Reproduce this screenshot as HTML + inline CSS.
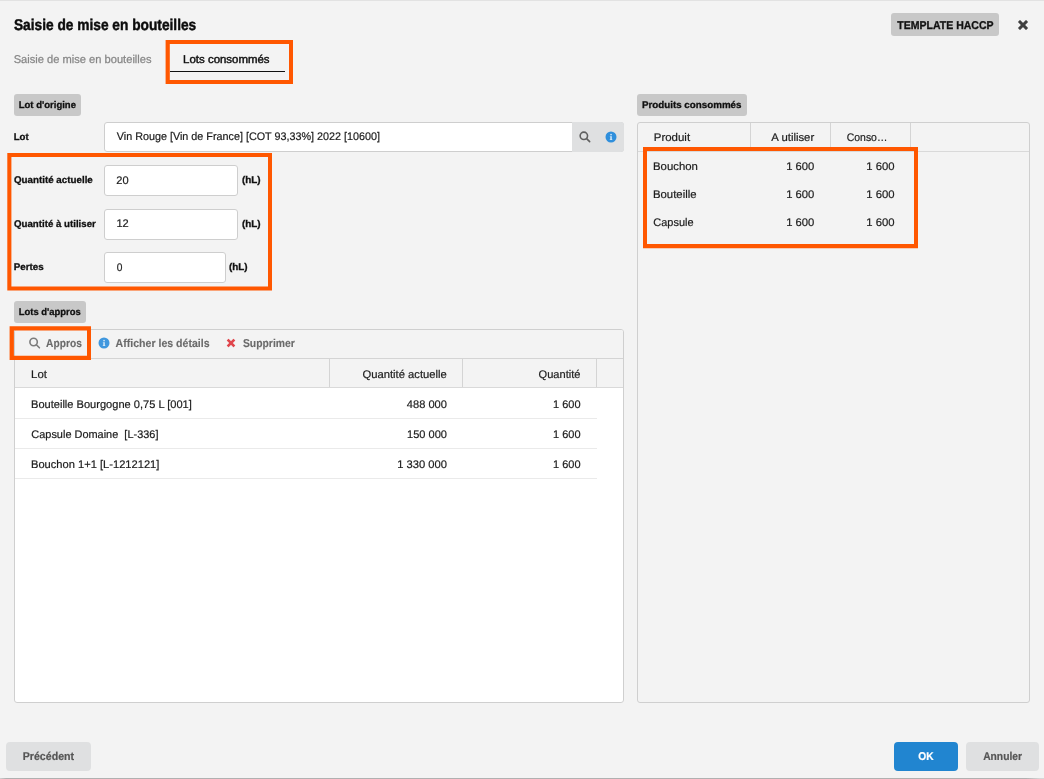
<!DOCTYPE html>
<html lang="fr">
<head>
<meta charset="utf-8">
<title>Saisie de mise en bouteilles</title>
<style>
*{box-sizing:border-box;margin:0;padding:0}
html,body{width:1044px;height:779px;overflow:hidden;background:#f3f3f3}
body{position:relative;font-family:"Liberation Sans",Arial,sans-serif;font-size:11px;color:#222}
.a{position:absolute}
.t{position:absolute;left:0;top:0;white-space:pre;transform-origin:0 0;text-rendering:geometricPrecision}
#root{position:absolute;left:0;top:0;width:1044px;height:779px;will-change:transform}
.s-title{font-size:15.5px;line-height:19px;font-weight:bold;color:#0c0c0c;-webkit-text-stroke:0.45px #0c0c0c}
.s-tpl{font-size:11.3px;line-height:15px;font-weight:bold;color:#111;-webkit-text-stroke:0.3px #111}
.s-tab1{font-size:11.3px;line-height:15px;font-weight:normal;color:#868686;-webkit-text-stroke:0.25px #868686}
.s-tab2{font-size:11.3px;line-height:15px;font-weight:normal;color:#111;-webkit-text-stroke:0.45px #111}
.s-lbl{font-size:9.7px;line-height:13px;font-weight:bold;color:#111;-webkit-text-stroke:0.3px #111}
.s-txt{font-size:11.1px;line-height:15px;font-weight:normal;color:#1c1c1c;-webkit-text-stroke:0.2px #1c1c1c}
.s-tb{font-size:11.4px;line-height:15px;font-weight:bold;color:#6a6a6a;-webkit-text-stroke:0.12px #6a6a6a}
.s-btn{font-size:11.3px;line-height:15px;font-weight:bold;color:#555;-webkit-text-stroke:0.2px #555}
.s-ok{font-size:11.3px;line-height:15px;font-weight:bold;color:#fff;-webkit-text-stroke:0.2px #fff}

</style>
</head>
<body>
<div id="root">
<div class="a" style="left:0px;top:0px;width:1044px;height:1px;background:#e2e2e2"></div>
<div class="a" style="left:0px;top:778px;width:1044px;height:1px;background:linear-gradient(to right,#d0d0d0 0,#b0b0b0 6px,#b0b0b0 1026px,#d6d6d6 1040px)"></div>
<div class="t s-title" style="transform:translate(13.95px,16.00px) scaleX(0.8852)">Saisie de mise en bouteilles</div>
<div class="a" style="left:891px;top:13px;width:108px;height:23px;background:#c8c8c8;border-radius:3px"></div>
<div class="t s-tpl" style="transform:translate(897.37px,19.00px) scaleX(0.9306)">TEMPLATE HACCP</div>
<svg class="a" style="left:1015px;top:16.85px" width="16" height="16" viewBox="-8 -8 16 16"><rect x="-5.80" y="-1.55" width="11.61" height="3.10" rx="0.5" fill="#404040" transform="rotate(45)"/><rect x="-5.80" y="-1.55" width="11.61" height="3.10" rx="0.5" fill="#404040" transform="rotate(-45)"/></svg>
<div class="t s-tab1" style="transform:translate(13.69px,53.00px) scaleX(0.9845)">Saisie de mise en bouteilles</div>
<div class="t s-tab2" style="transform:translate(183.11px,53.00px) scaleX(1.0128)">Lots consommés</div>
<div class="a" style="left:170px;top:71px;width:115px;height:1px;background:#111"></div>
<svg class="a" style="left:0;top:0" width="1044" height="779" viewBox="0 0 1044 779"><path fill="#ff5700" fill-rule="evenodd" d="M165.6 40H293V84H165.6Z M169.8 44H289V80H169.8Z"/></svg>
<div class="a" style="left:14px;top:94px;width:67px;height:22px;background:#c8c8c8;border-radius:3px"></div>
<div class="t s-lbl" style="transform:translate(18.72px,99.00px) scaleX(0.9822)">Lot d&#x27;origine</div>
<div class="t s-lbl" style="transform:translate(13.73px,131.00px) scaleX(0.9930)">Lot</div>
<div class="a" style="left:104px;top:122px;width:520px;height:30px;background:#fff;border:1px solid #cecece;border-radius:3px"></div>
<div class="a" style="left:572px;top:122px;width:52px;height:30px;background:#dfe0e1;border-radius:0 3px 3px 0"></div>
<div class="t s-txt" style="transform:translate(116.78px,130.00px) scaleX(0.9723)">Vin Rouge [Vin de France] [COT 93,33%] 2022 [10600]</div>
<svg class="a" style="left:0;top:0" width="1044" height="779" viewBox="0 0 1044 779"><circle cx="583.85" cy="135.85" r="3.7" fill="none" stroke="#606060" stroke-width="1.6"/><path d="M586.61 138.61 L589.65 141.65" stroke="#606060" stroke-width="1.6" stroke-linecap="round"/></svg>
<svg class="a" style="left:605px;top:130.75px" width="12" height="12" viewBox="0 0 12 12"><circle cx="6" cy="6" r="5.5" fill="#2f8fdc"/><rect x="5.3" y="2.9" width="1.5" height="1.4" fill="#fff" fill-opacity=".8"/><rect x="5.3" y="5.2" width="1.5" height="3.7" fill="#fff" fill-opacity=".8"/><rect x="4.8" y="5.2" width="0.6" height="0.7" fill="#fff" fill-opacity=".6"/><rect x="4.7" y="8.3" width="2.7" height="0.7" fill="#fff" fill-opacity=".6"/></svg>
<div class="t s-lbl" style="transform:translate(13.95px,174.00px) scaleX(1.0102)">Quantité actuelle</div>
<div class="a" style="left:104px;top:165px;width:134px;height:31px;background:#fff;border:1px solid #cecece;border-radius:3px"></div>
<div class="t s-txt" style="transform:translate(116.36px,173.60px) scaleX(0.9961)">20</div>
<div class="t s-lbl" style="transform:translate(241.92px,173.70px) scaleX(1.0224)">(hL)</div>
<div class="t s-lbl" style="transform:translate(13.95px,218.00px) scaleX(1.0008)">Quantité à utiliser</div>
<div class="a" style="left:104px;top:209px;width:134px;height:31px;background:#fff;border:1px solid #cecece;border-radius:3px"></div>
<div class="t s-txt" style="transform:translate(116.42px,217.00px) scaleX(0.9958)">12</div>
<div class="t s-lbl" style="transform:translate(241.92px,217.70px) scaleX(1.0224)">(hL)</div>
<div class="t s-lbl" style="transform:translate(13.72px,261.00px) scaleX(1.0152)">Pertes</div>
<div class="a" style="left:104px;top:252px;width:122px;height:31px;background:#fff;border:1px solid #cecece;border-radius:3px"></div>
<div class="t s-txt" style="transform:translate(116.66px,260.60px) scaleX(0.9187)">0</div>
<div class="t s-lbl" style="transform:translate(228.92px,260.70px) scaleX(1.0204)">(hL)</div>
<svg class="a" style="left:0;top:0" width="1044" height="779" viewBox="0 0 1044 779"><path fill="#ff5700" fill-rule="evenodd" d="M7.3 153H272V290.6H7.3Z M11.4 157H268V286.5H11.4Z"/></svg>
<div class="a" style="left:14px;top:301px;width:72px;height:22px;background:#c8c8c8;border-radius:3px"></div>
<div class="t s-lbl" style="transform:translate(18.72px,306.00px) scaleX(0.9736)">Lots d&#x27;appros</div>
<div class="a" style="left:14px;top:329px;width:610px;height:374px;background:#fff;border:1px solid #cfcfcf;border-radius:3px"></div>
<div class="a" style="left:15px;top:330px;width:608px;height:58px;background:#f3f3f3;border-radius:2px 2px 0 0"></div>
<div class="a" style="left:15px;top:358px;width:608px;height:1px;background:#d4d4d4"></div>
<div class="a" style="left:15px;top:387px;width:608px;height:1px;background:#d9d9d9"></div>
<svg class="a" style="left:0;top:0" width="1044" height="779" viewBox="0 0 1044 779"><circle cx="33.6" cy="342.0" r="3.7" fill="none" stroke="#7c7c7c" stroke-width="1.6"/><path d="M36.36 344.76 L39.40 347.80" stroke="#7c7c7c" stroke-width="1.6" stroke-linecap="round"/></svg>
<div class="t s-tb" style="transform:translate(46.12px,337.00px) scaleX(0.8966)">Appros</div>
<svg class="a" style="left:97.9px;top:336.9px" width="12" height="12" viewBox="0 0 12 12"><circle cx="6" cy="6" r="5.5" fill="#3f97de"/><rect x="5.3" y="2.9" width="1.5" height="1.4" fill="#fff" fill-opacity=".8"/><rect x="5.3" y="5.2" width="1.5" height="3.7" fill="#fff" fill-opacity=".8"/><rect x="4.8" y="5.2" width="0.6" height="0.7" fill="#fff" fill-opacity=".6"/><rect x="4.7" y="8.3" width="2.7" height="0.7" fill="#fff" fill-opacity=".6"/></svg>
<div class="t s-tb" style="transform:translate(115.52px,337.00px) scaleX(0.9289)">Afficher les détails</div>
<svg class="a" style="left:223.2px;top:335.1px" width="16" height="16" viewBox="-8 -8 16 16"><rect x="-4.87" y="-1.35" width="9.75" height="2.70" rx="0.5" fill="#e0464c" transform="rotate(45)"/><rect x="-4.87" y="-1.35" width="9.75" height="2.70" rx="0.5" fill="#e0464c" transform="rotate(-45)"/></svg>
<div class="t s-tb" style="transform:translate(242.93px,337.00px) scaleX(0.9109)">Supprimer</div>
<svg class="a" style="left:0;top:0" width="1044" height="779" viewBox="0 0 1044 779"><path fill="#ff5700" fill-rule="evenodd" d="M9.6 326.3H91V360H9.6Z M13.9 330.6H87V355.85H13.9Z"/></svg>
<div class="a" style="left:329px;top:359px;width:1px;height:28px;background:#d4d4d4"></div>
<div class="a" style="left:462px;top:359px;width:1px;height:28px;background:#d4d4d4"></div>
<div class="a" style="left:596px;top:359px;width:1px;height:28px;background:#d4d4d4"></div>
<div class="t s-txt" style="transform:translate(31.11px,368.00px) scaleX(1.0301)">Lot</div>
<div class="t s-txt" style="transform:translate(362.44px,368.00px) scaleX(1.0139)">Quantité actuelle</div>
<div class="t s-txt" style="transform:translate(538.57px,368.00px) scaleX(0.9992)">Quantité</div>
<div class="t s-txt" style="transform:translate(31.01px,398.00px) scaleX(0.9977)">Bouteille Bourgogne 0,75 L [001]</div>
<div class="t s-txt" style="transform:translate(406.83px,398.00px) scaleX(1.0003)">488 000</div>
<div class="t s-txt" style="transform:translate(553.07px,398.00px) scaleX(0.9898)">1 600</div>
<div class="a" style="left:15px;top:418px;width:582px;height:1px;background:#eaeaea"></div>
<div class="t s-txt" style="transform:translate(31.32px,428.00px) scaleX(0.9863)">Capsule Domaine  [L-336]</div>
<div class="t s-txt" style="transform:translate(407.04px,428.00px) scaleX(0.9951)">150 000</div>
<div class="t s-txt" style="transform:translate(553.07px,428.00px) scaleX(0.9898)">1 600</div>
<div class="a" style="left:15px;top:448px;width:582px;height:1px;background:#eaeaea"></div>
<div class="t s-txt" style="transform:translate(30.98px,458.00px) scaleX(1.0032)">Bouchon 1+1 [L-1212121]</div>
<div class="t s-txt" style="transform:translate(397.20px,458.00px) scaleX(1.0090)">1 330 000</div>
<div class="t s-txt" style="transform:translate(553.07px,458.00px) scaleX(0.9898)">1 600</div>
<div class="a" style="left:15px;top:478px;width:582px;height:1px;background:#eaeaea"></div>
<div class="a" style="left:637px;top:94px;width:110px;height:22px;background:#c8c8c8;border-radius:3px"></div>
<div class="t s-lbl" style="transform:translate(641.92px,99.00px) scaleX(1.0110)">Produits consommés</div>
<div class="a" style="left:637px;top:122px;width:393px;height:581px;border:1px solid #cfcfcf;border-radius:3px"></div>
<div class="a" style="left:638px;top:151px;width:391px;height:1px;background:#d9d9d9"></div>
<div class="a" style="left:750px;top:123px;width:1px;height:28px;background:#d4d4d4"></div>
<div class="a" style="left:830px;top:123px;width:1px;height:28px;background:#d4d4d4"></div>
<div class="a" style="left:910px;top:123px;width:1px;height:28px;background:#d4d4d4"></div>
<div class="t s-txt" style="transform:translate(653.78px,131.00px) scaleX(1.0328)">Produit</div>
<div class="t s-txt" style="transform:translate(771.36px,131.00px) scaleX(1.0218)">A utiliser</div>
<div class="t s-txt" style="transform:translate(846.76px,131.00px) scaleX(0.9401)">Conso…</div>
<div class="t s-txt" style="transform:translate(652.97px,160.00px) scaleX(1.0256)">Bouchon</div>
<div class="t s-txt" style="transform:translate(786.17px,160.00px) scaleX(1.0157)">1 600</div>
<div class="t s-txt" style="transform:translate(866.19px,160.00px) scaleX(1.0199)">1 600</div>
<div class="t s-txt" style="transform:translate(652.96px,188.00px) scaleX(1.0243)">Bouteille</div>
<div class="t s-txt" style="transform:translate(786.17px,188.00px) scaleX(1.0157)">1 600</div>
<div class="t s-txt" style="transform:translate(866.19px,188.00px) scaleX(1.0199)">1 600</div>
<div class="t s-txt" style="transform:translate(653.32px,216.00px) scaleX(0.9889)">Capsule</div>
<div class="t s-txt" style="transform:translate(786.17px,216.00px) scaleX(1.0157)">1 600</div>
<div class="t s-txt" style="transform:translate(866.19px,216.00px) scaleX(1.0199)">1 600</div>
<svg class="a" style="left:0;top:0" width="1044" height="779" viewBox="0 0 1044 779"><path fill="#ff5700" fill-rule="evenodd" d="M643 147H918V248.2H643Z M647 151H914V244.1H647Z"/></svg>
<div class="a" style="left:6px;top:742px;width:85px;height:29px;background:#dfe0e1;border-radius:4px"></div>
<div class="t s-btn" style="transform:translate(22.71px,750.00px) scaleX(0.9408)">Précédent</div>
<div class="a" style="left:894px;top:742px;width:64px;height:29px;background:#2185d0;border-radius:4px"></div>
<div class="t s-ok" style="transform:translate(918.36px,750.00px) scaleX(0.9037)">OK</div>
<div class="a" style="left:966px;top:742px;width:73px;height:29px;background:#dfe0e1;border-radius:4px"></div>
<div class="t s-btn" style="transform:translate(983.15px,750.00px) scaleX(0.9100)">Annuler</div>
</div>
</body>
</html>
